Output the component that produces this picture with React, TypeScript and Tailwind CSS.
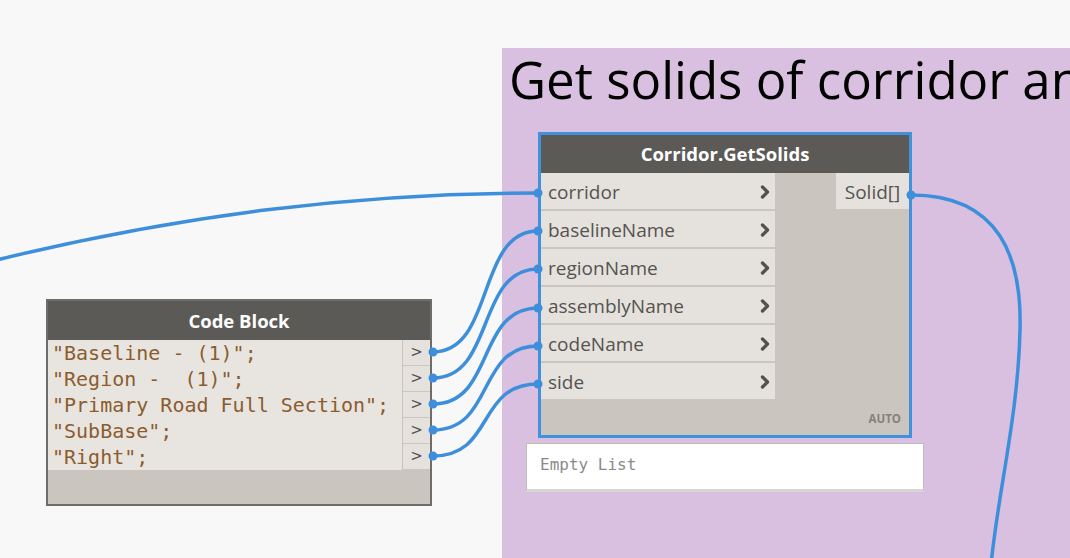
import { ChevronRight } from 'lucide-react'

const inputs = ['corridor', 'baselineName', 'regionName', 'assemblyName', 'codeName', 'side']
const codeLines = ['"Baseline - (1)";', '"Region -  (1)";', '"Primary Road Full Section";', '"SubBase";', '"Right";']

// wire endpoints (canvas coordinates)
const codeOutY = [352, 378, 404, 430, 456]
const corridorInY = [231, 269, 308, 346, 384]

function wire(x1: number, y1: number, x2: number, y2: number, d = 62) {
  return `M ${x1} ${y1} C ${x1 + d} ${y1}, ${x2 - d} ${y2}, ${x2} ${y2}`
}

function Wires() {
  return (
    <svg className="absolute inset-0 pointer-events-none" width={1070} height={558}>
      <g fill="none" stroke="#3d8fdb" strokeWidth={3.5} strokeLinecap="round">
        <path d="M -20 264 C 180 214, 360 193, 538 193" />
        {codeOutY.map((y, i) => (
          <path key={i} d={wire(433, y, 538, corridorInY[i])} />
        ))}
        <path d="M 911 195 C 1000 195, 1022 258, 1020 330 C 1018 420, 996 500, 990 575" />
      </g>
      <g fill="#3d8fdb">
        {corridorInY.concat([193]).map((y, i) => (
          <circle key={i} cx={538} cy={y} r={4.5} />
        ))}
        {codeOutY.map((y, i) => (
          <circle key={i} cx={433} cy={y} r={4.5} />
        ))}
        <circle cx={911} cy={195} r={4.5} />
      </g>
    </svg>
  )
}

function CorridorNode() {
  return (
    <div className="absolute left-[538px] top-[132px] w-[374px] h-[306px] border-[3px] border-[#4191dc] bg-[#cac6bf] flex flex-col">
      <div className="h-[38px] bg-[#5c5a57] text-white font-bold text-[18.5px] flex items-center justify-center">
        Corridor.GetSolids
      </div>
      <div className="flex">
        <div className="w-[234px] flex flex-col">
          {inputs.map((name) => (
            <div
              key={name}
              className="h-[38px] bg-[#e5e2dd] border-b-2 border-[#cbc7c0] flex items-center justify-between pl-[7px] pr-0 pt-[2px] text-[19px] text-[#555350]"
            >
              <span>{name}</span>
              <ChevronRight size={20} strokeWidth={4} className="text-[#55524e]" />
            </div>
          ))}
        </div>
        <div className="flex-1 flex justify-end">
          <div className="w-[73px] h-[36px] bg-[#e5e2dd] flex items-center justify-center pt-[2px] text-[19px] text-[#555350]">
            Solid[]
          </div>
        </div>
      </div>
      <div className="flex-1 flex items-end justify-end pr-[8px] pb-[8px]">
        <span className="text-[11.5px] font-bold text-[#85817b]">AUTO</span>
      </div>
    </div>
  )
}

function CodeBlockNode() {
  return (
    <div className="absolute left-[46px] top-[299px] w-[386px] h-[207px] border-2 border-[#6f6d6a] bg-[#cac6bf] flex flex-col">
      <div className="h-[39px] bg-[#5c5a57] text-white font-bold text-[18.5px] flex items-center justify-center">
        Code Block
      </div>
      <div className="flex">
        <div className="w-[354px] bg-[#e8e5e0] pl-[4px] font-['DejaVu_Sans_Mono',monospace] text-[20px] text-[#8c5c2f] leading-[26px]">
          {codeLines.map((line, i) => (
            <div key={i} className="h-[26px] whitespace-pre">{line}</div>
          ))}
        </div>
        <div className="flex-1 flex flex-col border-l border-[#c8c4bd]">
          {codeLines.map((_, i) => (
            <div
              key={i}
              className="h-[26px] bg-[#e5e2dd] border-b border-[#cbc7c0] flex items-center justify-center text-[15px] text-[#555350] font-['DejaVu_Sans',sans-serif]"
            >
              &gt;
            </div>
          ))}
        </div>
      </div>
    </div>
  )
}

export default function App() {
  return (
    <div className="relative w-[1070px] h-[558px] overflow-hidden bg-[#f8f8f8] font-['Open_Sans',sans-serif]">
      {/* group */}
      <div className="absolute left-[502px] top-[48px] w-[600px] h-[540px] bg-[#d9c0e0]">
        <div className="pl-[7px] pt-0 text-[51px] leading-[62px] text-black whitespace-nowrap">
          Get solids of corridor and
        </div>
      </div>

      {/* preview bubble */}
      <div className="absolute left-[526px] top-[443px] w-[398px] h-[49px] bg-white border border-[#bdbdbd] border-b-[3px] border-b-[#d6d6d6] pl-[13px] pt-[9px] font-['DejaVu_Sans_Mono',monospace] text-[16px] text-[#8a8a8a]">
        Empty List
      </div>

      <CorridorNode />
      <CodeBlockNode />
      <Wires />
    </div>
  )
}
